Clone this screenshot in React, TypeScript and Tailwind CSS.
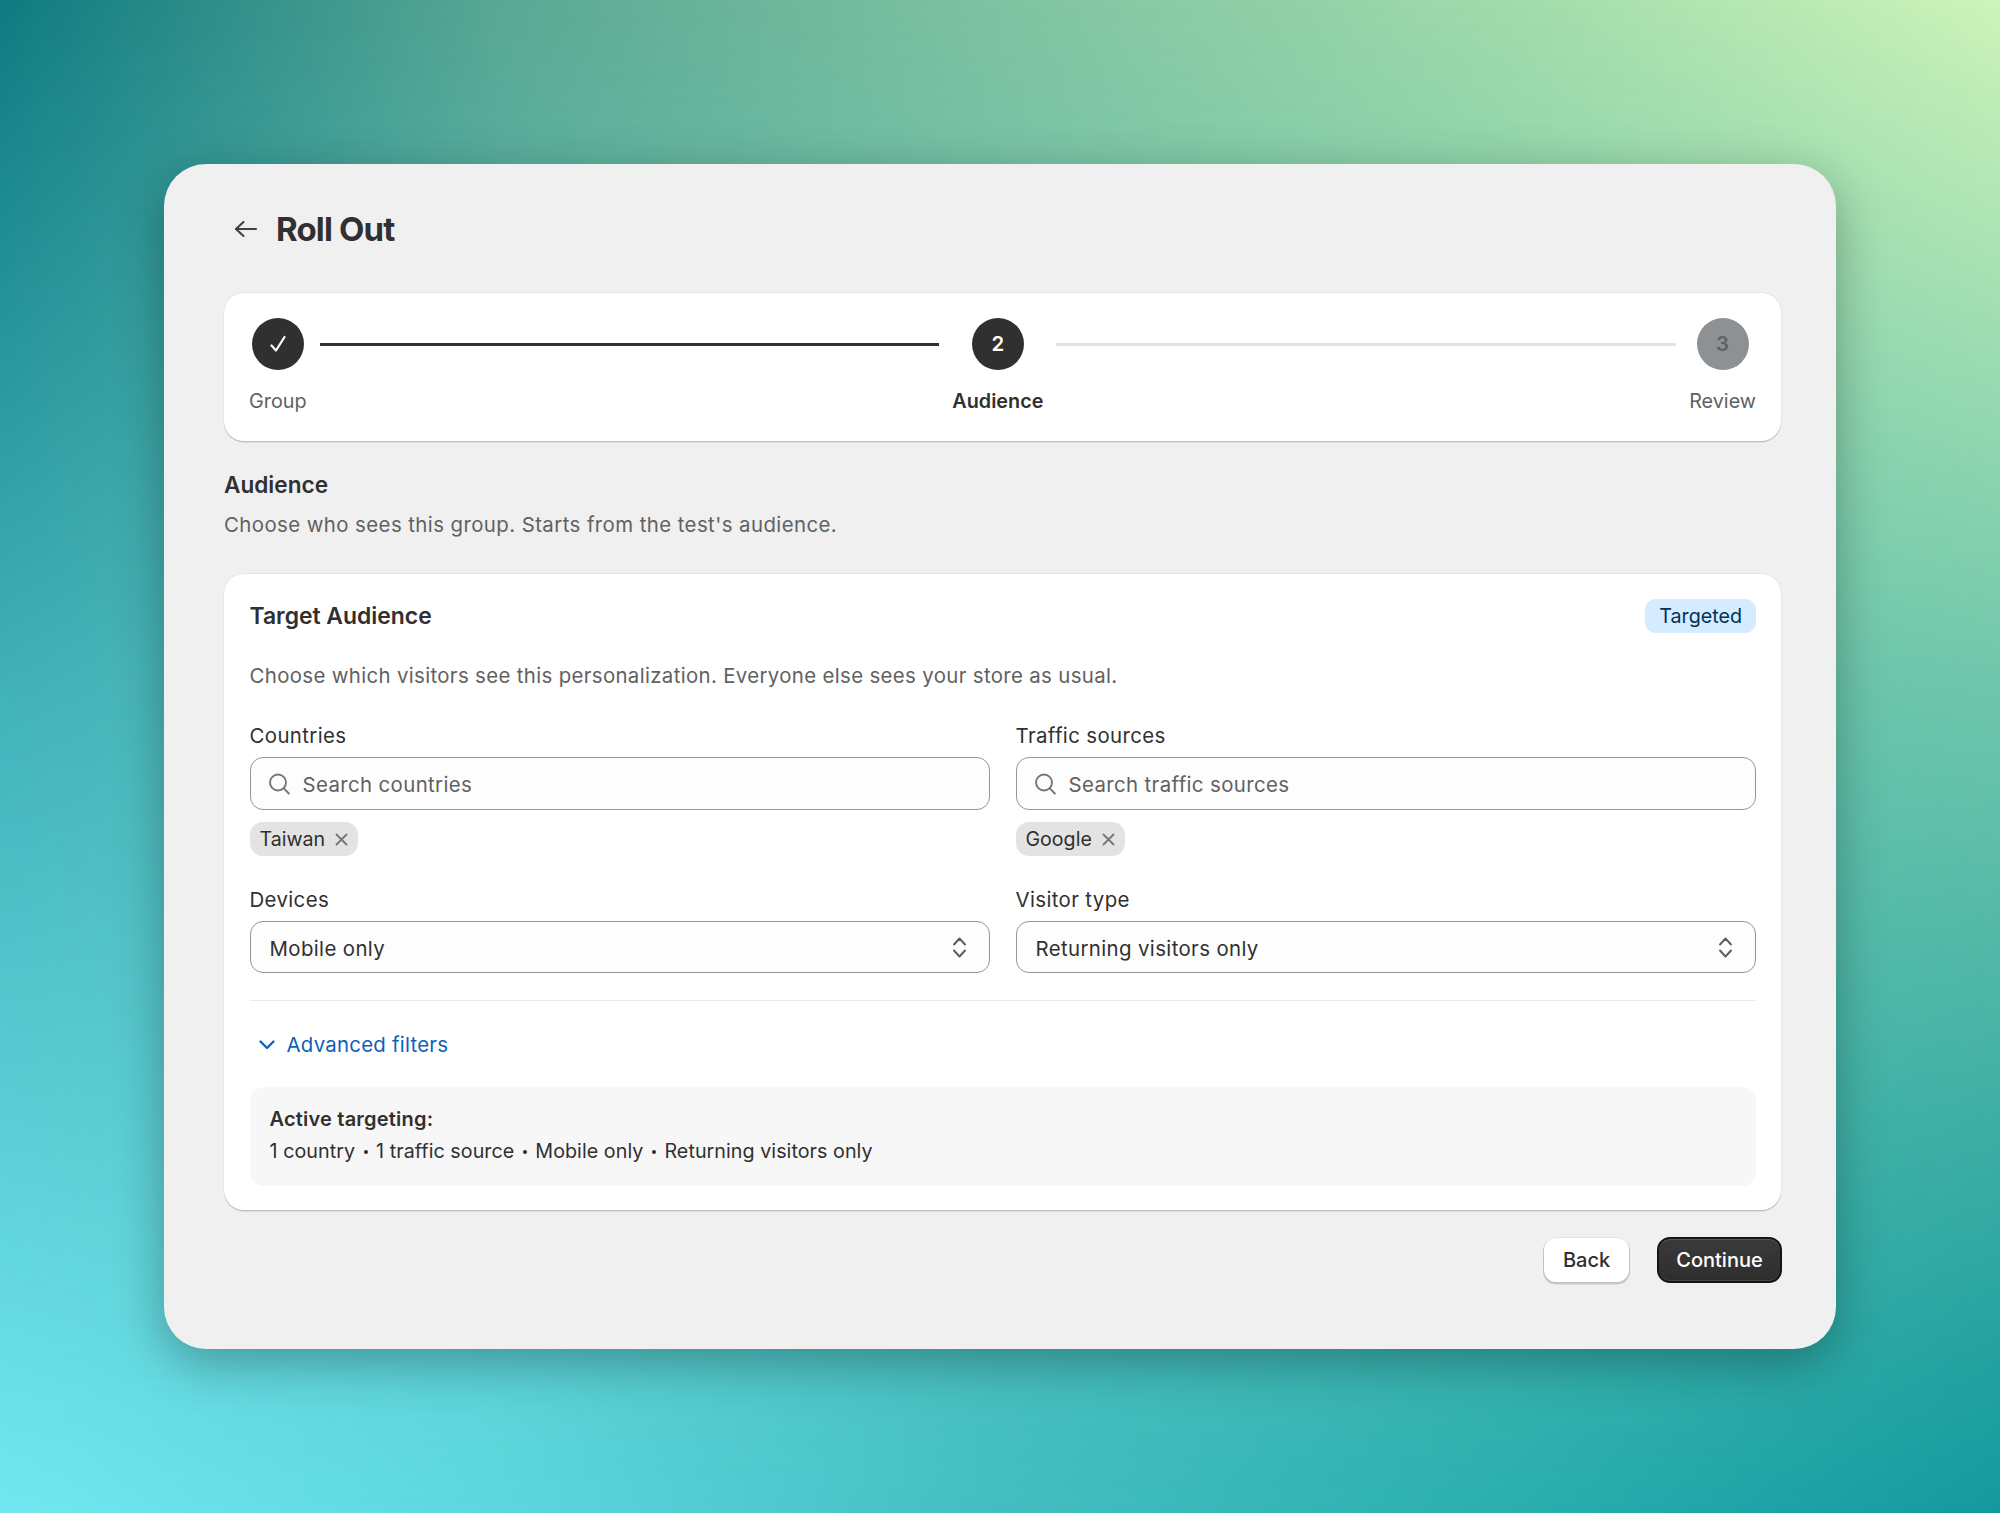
import React from 'react';

const SearchIcon = () => (
  <svg width="22" height="22" viewBox="0 0 22 22" fill="none" stroke="#757575" strokeWidth="1.9" strokeLinecap="round" className="mt-[1px] shrink-0">
    <circle cx="10" cy="9.5" r="8" />
    <path d="M15.8 15.3l5 5.2" />
  </svg>
);

const CloseIcon = () => (
  <svg width="13" height="13" viewBox="0 0 13 13" fill="none" stroke="#757575" strokeWidth="1.8" strokeLinecap="round" className="shrink-0">
    <path d="M1.5 1.5l10 10M11.5 1.5l-10 10" />
  </svg>
);

const UpDownIcon = () => (
  <svg width="15" height="21" viewBox="0 0 15 21" fill="none" stroke="#5c5c5c" strokeWidth="1.9" strokeLinecap="round" strokeLinejoin="round" className="shrink-0">
    <path d="M2 7.5L7.5 1.5l5.5 6" />
    <path d="M2 13.5l5.5 6 5.5-6" />
  </svg>
);

const Field = ({ label, children }: { label: string; children: React.ReactNode }) => (
  <div>
    <div className="h-[25px] pt-[1px] text-[20.4px] leading-[25px] tracking-[0.38px] text-[#303030]">{label}</div>
    {children}
  </div>
);

const SearchInput = ({ placeholder }: { placeholder: string }) => (
  <div className="mt-[10px] flex h-[53px] items-center gap-[13px] rounded-[13px] border border-[#969696] bg-[#fdfdfd] pl-[17px] text-[20.4px] tracking-[0.38px] text-[#616161]">
    <SearchIcon />
    <span className="pt-[4px]">{placeholder}</span>
  </div>
);

const Chip = ({ label }: { label: string }) => (
  <div className="mt-[12px] inline-flex h-[34px] items-center gap-[10px] rounded-[13px] bg-[#e3e3e3] pl-[10px] pr-[10px] align-top text-[19.6px] text-[#303030]">
    <span className="pt-[2px]">{label}</span>
    <CloseIcon />
  </div>
);

const SelectBox = ({ value }: { value: string }) => (
  <div className="mt-[10px] flex h-[52px] items-center justify-between rounded-[13px] border border-[#969696] bg-[#fdfdfd] pl-[19px] pr-[22px] text-[20.4px] tracking-[0.38px] text-[#303030]">
    <span className="pt-[4px]">{value}</span>
    <UpDownIcon />
  </div>
);

const Step = ({ label, active, circle }: { label: string; active?: boolean; circle: React.ReactNode }) => (
  <div className="flex flex-col items-center">
    {circle}
    <div className={`mt-[19px] h-[25px] text-[19.8px] leading-[25px] ${active ? 'font-semibold text-[#303030]' : 'text-[#616161]'}`}>
      {label}
    </div>
  </div>
);

const Dot = () => <span className="h-[4px] w-[4px] rounded-full bg-[#303030]" />;

const cardClass =
  'rounded-[20px] bg-white shadow-[0_1.5px_0_rgba(0,0,0,0.16),0_0_0_1px_rgba(0,0,0,0.04)]';

export default function App() {
  return (
    <div className="relative flex h-[1513px] w-full items-center justify-center overflow-hidden bg-[linear-gradient(to_right,#0f7b82_0%,#59a894_25%,#7fc3a2_50%,#a0dbab_75%,#cdf4b9_100%)] font-[family-name:Inter,sans-serif]">
      <div className="absolute inset-0 bg-[linear-gradient(to_right,#72e7ef_0%,#5cd7de_25%,#42bec2_50%,#2baeaf_75%,#12999e_100%)] [mask-image:linear-gradient(to_bottom,transparent_0%,rgba(0,0,0,0.5)_45%,black_100%)]" />

      <div className="relative h-[1185px] w-[1672px] rounded-[42px] bg-[#f0f0f0] pl-[60px] pr-[55px] pt-[45px] shadow-[0_14px_50px_rgba(0,0,0,0.3)]">
        {/* Header */}
        <div className="flex h-[40px] items-center">
          <svg width="24" height="18" viewBox="0 0 24 18" fill="none" stroke="#404040" strokeWidth="2.1" strokeLinecap="round" strokeLinejoin="round" className="ml-[10px]">
            <path d="M22 9H2" />
            <path d="M9.5 2L2 9l7.5 7" />
          </svg>
          <h1 className="ml-[18px] text-[33px] font-bold leading-[42px] tracking-[-0.85px] text-[#303030]">Roll Out</h1>
        </div>

        {/* Stepper */}
        <div className={`mt-[44px] h-[148px] px-[25px] pt-[25px] ${cardClass}`}>
          <div className="flex items-start gap-[13px]">
            <Step
              label="Group"
              circle={
                <div className="flex h-[52px] w-[52px] items-center justify-center rounded-full bg-[#303030]">
                  <svg width="18" height="18" viewBox="0 0 18 18" fill="none" stroke="#fff" strokeWidth="2.2" strokeLinecap="round" strokeLinejoin="round">
                    <path d="M2.5 10.5l4.5 5L15.5 2" />
                  </svg>
                </div>
              }
            />
            <div className="mt-[25px] h-[3px] flex-1 bg-[#303030]" />
            <Step
              active
              label="Audience"
              circle={
                <div className="flex h-[52px] w-[52px] items-center justify-center rounded-full bg-[#303030] text-[20.4px] font-semibold text-white">2</div>
              }
            />
            <div className="mt-[25px] h-[3px] flex-1 bg-[#e3e3e3]" />
            <Step
              label="Review"
              circle={
                <div className="flex h-[52px] w-[52px] items-center justify-center rounded-full bg-[#8e9194] text-[20.4px] font-semibold text-[#616161]">3</div>
              }
            />
          </div>
        </div>

        {/* Section title */}
        <h2 className="mt-[31px] text-[22.6px] font-semibold leading-[26px] text-[#303030]">Audience</h2>
        <p className="mt-[14px] text-[20.4px] leading-[25px] tracking-[0.42px] text-[#616161]">
          Choose who sees this group. Starts from the test's audience.
        </p>

        {/* Target audience card */}
        <div className={`mt-[37px] h-[636px] pl-[25.5px] pr-[25px] pt-[25px] ${cardClass}`}>
          <div className="flex h-[34px] items-center justify-between">
            <h3 className="pt-[1px] text-[22.9px] font-semibold text-[#303030]">Target Audience</h3>
            <span className="flex h-[34px] items-center rounded-[11px] bg-[#d5ebff] px-[14px] pt-[1px] text-[19.7px] text-[#00335c]">Targeted</span>
          </div>
          <p className="mt-[30px] text-[20.4px] leading-[25px] tracking-[0.35px] text-[#616161]">
            Choose which visitors see this personalization. Everyone else sees your store as usual.
          </p>

          <div className="mt-[34px] grid grid-cols-2 gap-x-[25.5px]">
            <Field label="Countries">
              <SearchInput placeholder="Search countries" />
              <Chip label="Taiwan" />
            </Field>
            <Field label="Traffic sources">
              <SearchInput placeholder="Search traffic sources" />
              <Chip label="Google" />
            </Field>
          </div>

          <div className="mt-[30px] grid grid-cols-2 gap-x-[25.5px]">
            <Field label="Devices">
              <SelectBox value="Mobile only" />
            </Field>
            <Field label="Visitor type">
              <SelectBox value="Returning visitors only" />
            </Field>
          </div>

          <div className="mt-[27px] h-px bg-[#ebebeb]" />

          <div className="mt-[31px] flex h-[25px] items-center gap-[12px] pl-[9px] text-[20.4px] tracking-[0.25px] text-[#0f5fb8]">
            <svg width="16" height="10" viewBox="0 0 16 10" fill="none" stroke="#0f5fb8" strokeWidth="2.3" strokeLinecap="round" strokeLinejoin="round">
              <path d="M1.5 1.5L8 8l6.5-6.5" />
            </svg>
            <span className="pt-[1px]">Advanced filters</span>
          </div>

          <div className="mt-[30px] h-[99px] rounded-[14px] bg-[#f7f7f7] px-[20px] pt-[20px]">
            <div className="h-[25px] text-[20px] font-semibold leading-[25px] tracking-[0.2px] text-[#303030]">Active targeting:</div>
            <div className="mt-[7px] flex h-[25px] items-center gap-[8.5px] text-[19.7px] leading-[25px] tracking-[0.05px] text-[#303030]">
              <span>1 country</span>
              <Dot />
              <span>1 traffic source</span>
              <Dot />
              <span>Mobile only</span>
              <Dot />
              <span>Returning visitors only</span>
            </div>
          </div>
        </div>

        {/* Footer actions */}
        <div className="-mr-[1px] mt-[27px] flex items-center justify-end gap-[28px]">
          <button className="flex h-[44px] w-[85px] items-center justify-center rounded-[12px] bg-white text-[20px] font-medium text-[#303030] shadow-[0_1.5px_0_1px_rgba(0,0,0,0.16),0_0_0_1px_rgba(0,0,0,0.04)]">
            Back
          </button>
          <button className="flex h-[46px] w-[125px] items-center justify-center rounded-[13px] border-2 border-[#141414] bg-[linear-gradient(to_bottom,#3a3a3a,#2e2e2e)] text-[20px] font-medium text-white shadow-[inset_0_1px_0_rgba(255,255,255,0.16),inset_0_-1px_0_rgba(255,255,255,0.12)]">
            Continue
          </button>
        </div>
      </div>
    </div>
  );
}
